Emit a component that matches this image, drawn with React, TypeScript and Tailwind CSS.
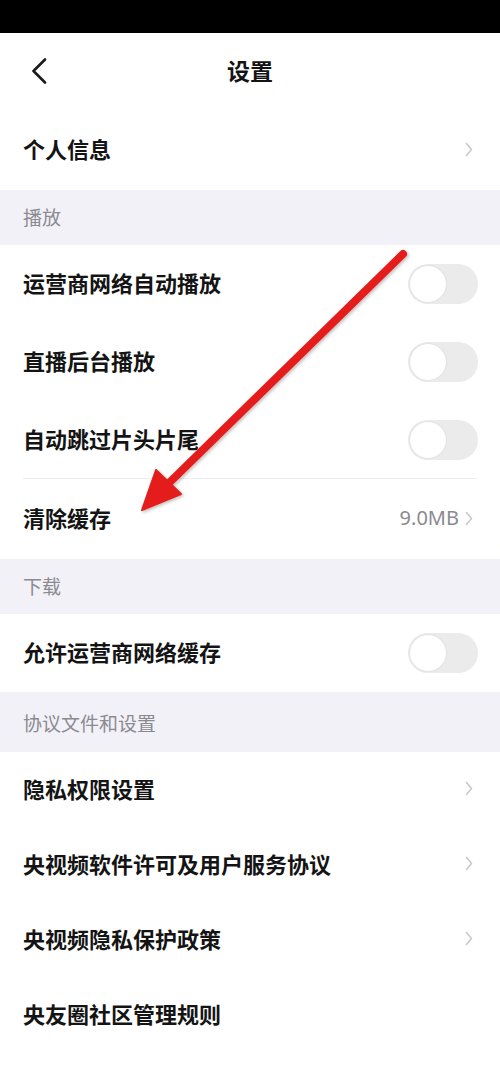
import React, { useState } from 'react';

type Row = {
  label: string;
  kind: 'link' | 'toggle' | 'plain';
  value?: string;
  divider?: boolean;
};

type Section = {
  title?: string;
  rowHeight: string;
  rows: Row[];
};

const sections: Section[] = [
  {
    rowHeight: 'h-[80px]',
    rows: [{ label: '个人信息', kind: 'link' }],
  },
  {
    title: '播放',
    rowHeight: 'h-[78px]',
    rows: [
      { label: '运营商网络自动播放', kind: 'toggle' },
      { label: '直播后台播放', kind: 'toggle' },
      { label: '自动跳过片头片尾', kind: 'toggle', divider: true },
      { label: '清除缓存', kind: 'link', value: '9.0MB' },
    ],
  },
  {
    title: '下载',
    rowHeight: 'h-[78px]',
    rows: [{ label: '允许运营商网络缓存', kind: 'toggle' }],
  },
  {
    title: '协议文件和设置',
    rowHeight: 'h-[75px]',
    rows: [
      { label: '隐私权限设置', kind: 'link' },
      { label: '央视频软件许可及用户服务协议', kind: 'link' },
      { label: '央视频隐私保护政策', kind: 'link' },
      { label: '央友圈社区管理规则', kind: 'plain' },
    ],
  },
];

const Chevron = () => (
  <svg width="8" height="15" viewBox="0 0 8 15" fill="none" className="ml-[6px]">
    <path d="M1.5 1.5 L6.5 7.5 L1.5 13.5" stroke="#c9c9cc" strokeWidth="1.6" strokeLinecap="round" strokeLinejoin="round" />
  </svg>
);

const Toggle = () => {
  const [on, setOn] = useState(false);
  return (
    <button
      onClick={() => setOn(!on)}
      className={`w-[70px] h-[40px] rounded-full p-[2px] flex items-center ${on ? 'bg-[#3c7bff] justify-end' : 'bg-[#ebebeb] justify-start'}`}
    >
      <span className="w-[36px] h-[36px] rounded-full bg-white shadow-[0_0_2px_rgba(0,0,0,0.12)]" />
    </button>
  );
};

const App: React.FC = () => {
  return (
    <div className="relative w-[500px] min-h-[1083px] bg-white font-['Noto_Sans_CJK_SC','Noto_Sans',sans-serif] text-[#141414] overflow-hidden">
      <div className="h-[33px] bg-black" />

      <div className="h-[77px] flex items-center justify-between px-[30px] pb-[2px]">
        <svg width="18" height="26" viewBox="0 0 18 26" fill="none">
          <path d="M15 1.5 L3.5 13 L15 24.5" stroke="#1a1a1a" strokeWidth="2.6" strokeLinecap="round" strokeLinejoin="round" />
        </svg>
        <h1 className="text-[23px] font-bold leading-none">设置</h1>
        <div className="w-[18px]" />
      </div>

      {sections.map((section, i) => (
        <div key={i}>
          {section.title && (
            <div
              className={`${i === 3 ? 'h-[60px] pt-[3px]' : 'h-[55px]'} bg-[#f2f1f7] flex items-center px-[23px] text-[19px] text-[#8b8a90]`}
            >
              {section.title}
            </div>
          )}
          {section.rows.map(row => (
            <div key={row.label} className="px-[23px]">
              <div
                className={`${row.label === '清除缓存' ? 'h-[80px]' : section.rowHeight} flex items-center justify-between ${row.divider ? 'border-b border-[#ededed]' : ''}`}
              >
                <span className="text-[22px] font-bold leading-none -mt-[4px]">{row.label}</span>
                {row.kind === 'toggle' && (
                  <span className="-mr-[1px]">
                    <Toggle />
                  </span>
                )}
                {row.kind === 'link' && (
                  <span className="flex items-center pr-[4px] -mt-[2px]">
                    {row.value && (
                      <span className="font-['Noto_Sans',sans-serif] text-[20px] text-[#8b8a90]">{row.value}</span>
                    )}
                    <Chevron />
                  </span>
                )}
              </div>
            </div>
          ))}
        </div>
      ))}

      {/* red annotation arrow */}
      <svg className="absolute left-0 top-0 pointer-events-none" width="500" height="1083" viewBox="0 0 500 1083">
        <defs>
          <filter id="arrowShadow" x="-20%" y="-20%" width="140%" height="140%">
            <feDropShadow dx="1.5" dy="1.5" stdDeviation="1.5" floodColor="#000" floodOpacity="0.25" />
          </filter>
        </defs>
        <g filter="url(#arrowShadow)">
          <line x1="403" y1="254" x2="170" y2="482" stroke="#e41f1b" strokeWidth="8" strokeLinecap="round" />
          <polygon points="142,510 156,470 181,494" fill="#e41f1b" stroke="#e41f1b" strokeWidth="2" strokeLinejoin="round" />
        </g>
      </svg>
    </div>
  );
};

export default App;
